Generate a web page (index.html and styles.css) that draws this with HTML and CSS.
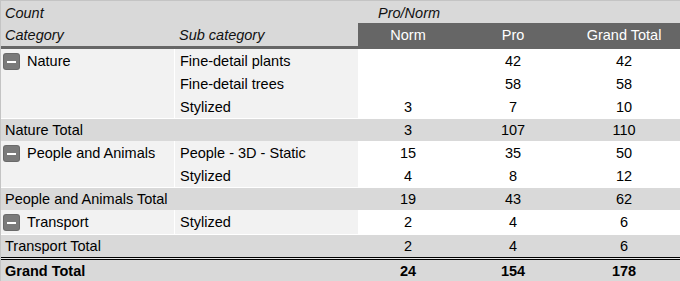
FILE: index.html
```html
<!DOCTYPE html>
<html lang="en">
<head>
<meta charset="utf-8">
<title>Pivot table</title>
<link rel="stylesheet" href="styles.css">
</head>
<body>
<table class="pivot">
  <colgroup>
    <col class="c-cat"><col class="c-sub"><col class="c-norm"><col class="c-pro"><col class="c-gt">
  </colgroup>
  <thead>
    <tr class="h1">
      <th class="hlabel" colspan="2">Count</th>
      <th class="hlabel hpivot" colspan="3">Pro/Norm</th>
    </tr>
    <tr class="h2">
      <th class="hlabel">Category</th>
      <th class="hlabel">Sub category</th>
      <th class="hcol">Norm</th>
      <th class="hcol">Pro</th>
      <th class="hcol">Grand Total</th>
    </tr>
  </thead>
  <tbody>
    <tr class="row">
      <td class="cat" rowspan="3"><span class="toggle"></span>Nature</td>
      <td class="sub">Fine-detail plants</td>
      <td class="num"></td><td class="num">42</td><td class="num">42</td>
    </tr>
    <tr class="row">
      <td class="sub">Fine-detail trees</td>
      <td class="num"></td><td class="num">58</td><td class="num">58</td>
    </tr>
    <tr class="row">
      <td class="sub">Stylized</td>
      <td class="num">3</td><td class="num">7</td><td class="num">10</td>
    </tr>
    <tr class="total">
      <td class="tlabel" colspan="2">Nature Total</td>
      <td class="num">3</td><td class="num">107</td><td class="num">110</td>
    </tr>
    <tr class="row">
      <td class="cat" rowspan="2"><span class="toggle"></span>People and Animals</td>
      <td class="sub">People - 3D - Static</td>
      <td class="num">15</td><td class="num">35</td><td class="num">50</td>
    </tr>
    <tr class="row">
      <td class="sub">Stylized</td>
      <td class="num">4</td><td class="num">8</td><td class="num">12</td>
    </tr>
    <tr class="total">
      <td class="tlabel" colspan="2">People and Animals Total</td>
      <td class="num">19</td><td class="num">43</td><td class="num">62</td>
    </tr>
    <tr class="row">
      <td class="cat"><span class="toggle"></span>Transport</td>
      <td class="sub">Stylized</td>
      <td class="num">2</td><td class="num">4</td><td class="num">6</td>
    </tr>
    <tr class="total">
      <td class="tlabel" colspan="2">Transport Total</td>
      <td class="num">2</td><td class="num">4</td><td class="num">6</td>
    </tr>
  </tbody>
  <tfoot>
    <tr class="grand">
      <td class="tlabel" colspan="2">Grand Total</td>
      <td class="num">24</td><td class="num">154</td><td class="num">178</td>
    </tr>
  </tfoot>
</table>
</body>
</html>
```
FILE: styles.css
```css
html, body {
  margin: 0;
  background: #fff;
}

body {
  font-family: "Liberation Sans", Arial, sans-serif;
  font-size: 14.5px;
  color: #000;
}

.pivot {
  table-layout: fixed;
  border-collapse: separate;
  border-spacing: 0;
  width: 680px;
  border-top: 1px solid #c4c4c4;
  border-left: 1px solid #c4c4c4;
}

.c-cat { width: 174px; }
.c-sub { width: 183px; }
.c-norm { width: 100px; }
.c-pro { width: 110px; }
.c-gt { width: 112px; }

th, td {
  padding: 0 4px;
  vertical-align: middle;
  white-space: nowrap;
  overflow: hidden;
  font-weight: normal;
}

/* header */
.h1 { height: 22px; }
.h1 th { padding-top: 2px; }
.h2 { height: 26px; }

.hlabel {
  background: #d9d9d9;
  font-style: italic;
  text-align: left;
  color: #111;
}

.hpivot { padding-left: 20px; }

.h2 th {
  padding-bottom: 3px;
  box-shadow: inset 0 -3px #666;
}

.h2 .hcol {
  background: #666;
  color: #fff;
  text-align: center;
}

/* body */
.row, .total { height: 23px; }

.sub { padding-left: 5px; }

.cat {
  background: #f2f2f2;
  vertical-align: top;
  line-height: 24px;
  padding-left: 2px;
  box-shadow: inset -1px 0 #fff;
}

.sub {
  background: #f2f2f2;
}

.num {
  text-align: center;
  background: #fff;
}

.toggle {
  display: inline-block;
  width: 17px;
  height: 17px;
  margin-right: 7px;
  vertical-align: -4px;
  border-radius: 3px;
  background: #7a7a7a linear-gradient(#fff, #fff) center / 9px 2px no-repeat;
  box-shadow: inset 0 0 0 1px #6a6a6a;
}

.total td {
  background: #d9d9d9;
  box-shadow: inset 0 1px #fff;
}

/* grand total */
.grand { height: 25px; }

.grand td {
  background: #d9d9d9;
  font-weight: bold;
  padding-top: 3px;
  box-shadow: inset 0 1px #000, inset 0 2px #e6e6e6, inset 0 3px #000;
}
```
